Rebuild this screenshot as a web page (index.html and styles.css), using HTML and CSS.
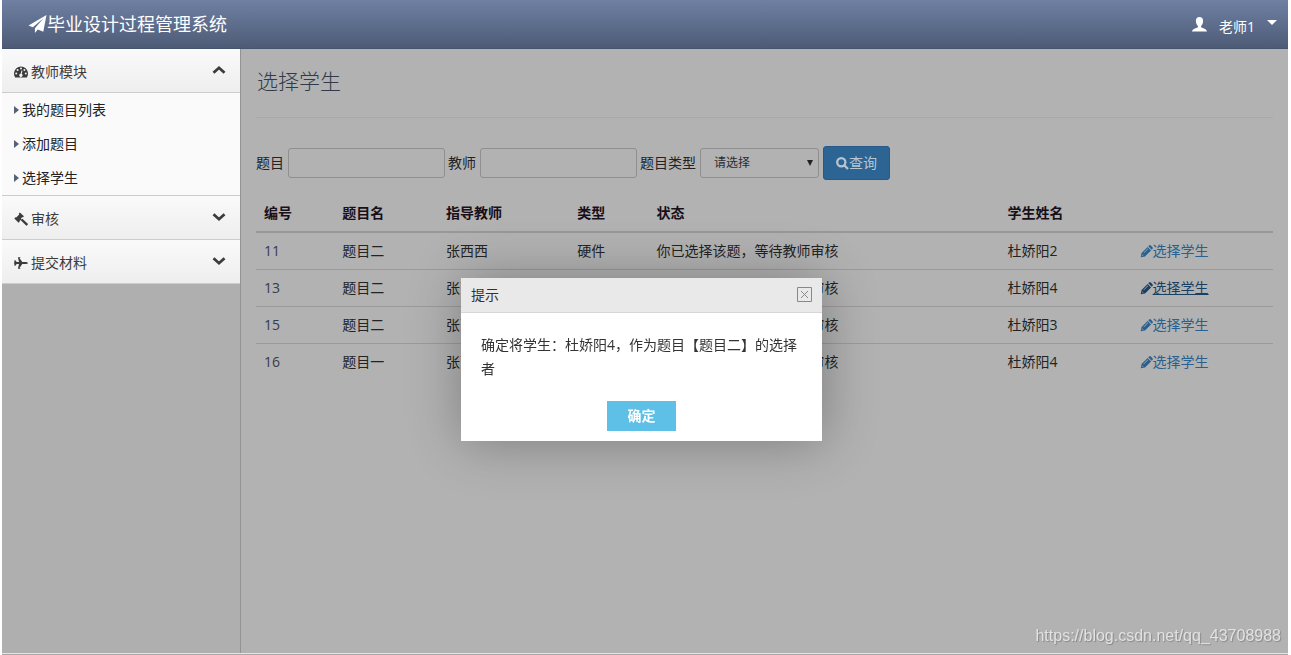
FILE: index.html
```html
<!DOCTYPE html>
<html lang="zh-CN">
<head>
<meta charset="utf-8">
<title>毕业设计过程管理系统</title>
<link rel="stylesheet" href="styles.css">
</head>
<body>
<svg class="defs" width="0" height="0" aria-hidden="true">
  <symbol id="pencil" viewBox="0 0 14 14"><path fill-rule="evenodd" d="M.8 13.200l.9-4.600L8.200 2.100l3.700 3.700-6.500 6.500zM2.300 11.700l1.600-.3-1.200-1.300zM3.600 8.500l.5.5 4.600-4.600-.5-.5zM8.900 1.400l.8-.8c.6-.6 1.400-.6 2 0l1.700 1.700c.6.600.6 1.400 0 2l-.8.8z"/></symbol>
  <symbol id="chevron" viewBox="0 0 14 10"><path d="M1.500 2.200L7 7.200l5.500-5" fill="none" stroke="currentColor" stroke-width="2.800"/></symbol>
  <symbol id="caret" viewBox="0 0 5 8"><path d="M0 0l5 4-5 4z"/></symbol>
</svg>
<header class="topbar">
  <h1 class="brand">
    <svg class="plane" viewBox="0 0 18 18" aria-hidden="true"><path d="M18 0L0 10.500l4.300 1.800L15 3.300 6.400 13.200V18l2.900-3.500 5.500 2.300z"/></svg>
    <span>毕业设计过程管理系统</span>
  </h1>
  <button class="user" type="button">
    <svg class="person" viewBox="0 0 15 15" aria-hidden="true"><path d="M7.500 0C5.200 0 3.900 1.500 3.900 4c0 2.300.9 3.900 2 4.900v1.300C4.500 11.100 0 12 0 14.500h15c0-2.500-4.500-3.400-5.900-4.300V8.900c1.100-1 2-2.600 2-4.900 0-2.500-1.300-4-3.600-4z"/></svg>
    <span>老师1</span>
    <svg class="drop" viewBox="0 0 10 5" aria-hidden="true"><path d="M0 0h10L5 5z"/></svg>
  </button>
</header>
<div class="layout">
  <nav class="sidebar">
    <button class="group" type="button" aria-expanded="true">
      <svg class="gicon" viewBox="0 0 14 14" aria-hidden="true"><path fill-rule="evenodd" d="M1.200 12.500A7 7 0 1 1 12.800 12.500zM2.200 7.500a1 1 0 1 0 0 2 1 1 0 0 0 0-2zM3.600 4a1 1 0 1 0 0 2 1 1 0 0 0 0-2zM7 2.500a1 1 0 1 0 0 2 1 1 0 0 0 0-2zM10.400 4a1 1 0 1 0 0 2 1 1 0 0 0 0-2zM11.800 7.500a1 1 0 1 0 0 2 1 1 0 0 0 0-2zM7.500 5.500L6.600 8.800a1.600 1.600 0 1 0 1.100.2l.8-3.300z"/></svg>
      <span>教师模块</span><svg class="chev up" aria-hidden="true"><use href="#chevron"/></svg>
    </button>
    <ul class="items">
      <li><a href="#"><svg class="caret" aria-hidden="true"><use href="#caret"/></svg>我的题目列表</a></li>
      <li><a href="#"><svg class="caret" aria-hidden="true"><use href="#caret"/></svg>添加题目</a></li>
      <li><a href="#"><svg class="caret" aria-hidden="true"><use href="#caret"/></svg>选择学生</a></li>
    </ul>
    <button class="group" type="button" aria-expanded="false">
      <svg class="gicon" viewBox="0 0 14 14" aria-hidden="true"><path d="M5.900.5l4 3.700-1 1.200-.6-.3L6.800 6.700l.7.7.9-.7 5.400 5c.7.700-1 2.500-1.700 1.800L7 8.500l-.6-.5-.9.900.3.700-1.200 1.100L.3 6.500l1.200-1.300.7.300L5.200 2.400l-.4-.8z"/></svg>
      <span>审核</span><svg class="chev" aria-hidden="true"><use href="#chevron"/></svg>
    </button>
    <button class="group" type="button" aria-expanded="false">
      <svg class="gicon" viewBox="0 0 14 14" aria-hidden="true"><path d="M14 7c0 .7-1.500 1.100-3 1.100H8.300L5.500 12h.8v.8H3.900L5 8.100H2.700L1.400 9.800H.4V8.100L0 7l.4-1.100V4.200h1l1.300 1.700H5L3.900 1.200h2.400V2h-.8l2.800 3.900H11c1.500 0 3 .4 3 1.100z"/></svg>
      <span>提交材料</span><svg class="chev" aria-hidden="true"><use href="#chevron"/></svg>
    </button>
  </nav>
  <main class="content">
    <h2 class="title">选择学生</h2>
    <form class="search">
      <label for="topic">题目</label><input id="topic" class="field" type="text">
      <label for="teacher">教师</label><input id="teacher" class="field" type="text">
      <label for="kind">题目类型</label>
      <span class="pick"><select id="kind"><option>请选择</option></select><svg class="arrow" viewBox="0 0 6 6" aria-hidden="true"><path d="M0 0h6L3 6z"/></svg></span>
      <button class="query" type="button"><svg viewBox="0 0 13 13" aria-hidden="true"><circle cx="5.300" cy="5.300" r="4.100"/><path d="M8.300 8.300l3.700 3.700"/></svg>查询</button>
    </form>
    <table class="grid">
      <thead><tr><th class="c1">编号</th><th class="c2">题目名</th><th class="c3">指导教师</th><th class="c4">类型</th><th class="c5">状态</th><th class="c6">学生姓名</th><th class="c7"></th></tr></thead>
      <tbody>
        <tr><td class="num">11</td><td>题目二</td><td>张西西</td><td>硬件</td><td>你已选择该题，等待教师审核</td><td>杜娇阳2</td><td><a class="act" href="#"><svg aria-hidden="true"><use href="#pencil"/></svg>选择学生</a></td></tr>
        <tr><td class="num">13</td><td>题目二</td><td>张西西</td><td>硬件</td><td>你已选择该题，等待教师审核</td><td>杜娇阳4</td><td><a class="act active" href="#"><svg aria-hidden="true"><use href="#pencil"/></svg><span>选择学生</span></a></td></tr>
        <tr><td class="num">15</td><td>题目二</td><td>张西西</td><td>硬件</td><td>你已选择该题，等待教师审核</td><td>杜娇阳3</td><td><a class="act" href="#"><svg aria-hidden="true"><use href="#pencil"/></svg>选择学生</a></td></tr>
        <tr><td class="num">16</td><td>题目一</td><td>张西西</td><td>硬件</td><td>你已选择该题，等待教师审核</td><td>杜娇阳4</td><td><a class="act" href="#"><svg aria-hidden="true"><use href="#pencil"/></svg>选择学生</a></td></tr>
      </tbody>
    </table>
  </main>
</div>
<div class="overlay">
  <section class="dialog" role="dialog" aria-labelledby="dlg">
    <header class="dhead"><h3 id="dlg">提示</h3><button class="close" type="button" aria-label="关闭"><svg viewBox="0 0 15 15" aria-hidden="true"><path d="M.5.5h14v14H.5zM4 4l7 7M11 4l-7 7"/></svg></button></header>
    <p class="msg">确定将学生：杜娇阳4，作为题目【题目二】的选择者</p>
    <button class="ok" type="button">确定</button>
  </section>
</div>
<div class="mark">https://blog.csdn.net/qq_43708988</div>
</body>
</html>
```
FILE: styles.css
```css
* { box-sizing: border-box; }
body {
  margin: 0;
  padding: 0 3px 0 2px;
  height: 100vh;
  display: flex;
  flex-direction: column;
  background: #fff;
  color: #232323;
  font: 14px/20px "Open Sans", "Noto Sans CJK SC", sans-serif;
  overflow: hidden;
}
button, input, select { font: inherit; color: inherit; }
h1, h2, h3, p, ul { margin: 0; padding: 0; font-weight: 400; }
a { text-decoration: none; color: inherit; }
svg { fill: currentColor; flex: none; }
.defs { position: absolute; }

.topbar {
  flex: none;
  height: 49px;
  padding: 0 11px 0 26px;
  display: flex;
  align-items: center;
  justify-content: space-between;
  background: linear-gradient(#6f80a3, #4d5b76);
  border-bottom: 1px solid #46536d;
  color: #fff;
}
.brand { display: flex; align-items: center; font-size: 18px; line-height: 26px; }
.plane { width: 19px; height: 18px; }
.user {
  display: flex;
  align-items: center;
  gap: 12px;
  padding: 5px 0 0;
  border: 0;
  background: none;
}
.person { width: 15px; height: 15px; margin-bottom: 4px; }
.drop { width: 10px; height: 5px; margin-bottom: 8px; }

.layout {
  flex: 1;
  display: flex;
  background: #b2b2b2;
  border-bottom: 1px solid #a8a8a8;
  box-shadow: inset 0 -1px #e4e4e4;
}
.sidebar {
  flex: none;
  width: 239px;
  margin-bottom: 1px;
  background: #afafaf;
  border-right: 1px solid #939393;
}
.group {
  display: flex;
  align-items: center;
  gap: 3px;
  width: 100%;
  height: 44px;
  padding: 2px 14px 0 12px;
  border: 0;
  border-bottom: 1px solid #ccc;
  background: linear-gradient(#fafafa, #eee);
  color: #3c3c3c;
}
.gicon { width: 14px; height: 14px; }
.chev { width: 14px; height: 10px; margin: 0 0 4px auto; }
.up { transform: rotate(180deg); }
.items { list-style: none; background: #fafafa; border-bottom: 1px solid #ccc; }
.items a { display: flex; align-items: center; gap: 3px; height: 34px; padding-left: 12px; color: #222; }
.caret { width: 5px; height: 8px; color: #566274; }

.content { flex: 1; padding: 0 15px; }
.title {
  height: 69px;
  padding: 19px 1px;
  border-bottom: 1px solid #a8a8a8;
  color: #303a49;
  font-size: 21px;
  font-weight: 300;
  line-height: 26px;
}
.search { display: flex; align-items: center; gap: 4px; margin-top: 28px; }
.field, .pick select {
  height: 30px;
  border: 1px solid #8f8f8f;
  border-radius: 3px;
  background: #b2b2b2;
}
.field { width: 157px; margin-right: -1px; }
.pick { display: flex; align-items: center; }
.pick select { appearance: none; width: 119px; padding: 0 12px 0 13px; font-size: 12px; color: #2d2d2d; }
.arrow { width: 6px; height: 6px; margin: 0 6px 0 -12px; pointer-events: none; color: #222; }
.query {
  display: flex;
  align-items: center;
  justify-content: center;
  width: 67px;
  height: 34px;
  padding: 0;
  border: 1px solid #28598a;
  border-radius: 3px;
  background: #2c6493;
  color: #b9c6d2;
}
.query svg { width: 13px; height: 13px; fill: none; stroke: currentColor; stroke-width: 2.300; }

.grid { width: 100%; margin-top: 14px; border-collapse: separate; border-spacing: 0; table-layout: fixed; }
.grid th, .grid td { padding: 8px; text-align: left; white-space: nowrap; }
.grid th { height: 39px; padding: 9px 8px 8px; border-bottom: 2px solid #989898; color: #180f18; font-weight: 700; }
.grid td { border-bottom: 1px solid #9b9b9b; }
.grid tr:last-child td { border-bottom: 0; }
.c1 { width: 7.7%; }
.c2 { width: 10.2%; }
.c3 { width: 12.9%; }
.c4 { width: 7.8%; }
.c5 { width: 34.5%; }
.c6 { width: 13%; }
.c7 { width: 13.9%; }
.grid .num { color: #353c4e; }
.act { display: flex; align-items: center; color: #29608f; }
.act svg { width: 13px; height: 13px; }
.active { color: #193f63; }
.active span { text-decoration: underline; }

.overlay {
  position: fixed;
  inset: 0;
  display: grid;
  place-items: center;
  padding: 63px 8px 0 0;
}
.dialog {
  width: 361px;
  padding-bottom: 10px;
  background: #fff;
  box-shadow: 1px 1px 50px rgba(0, 0, 0, .3);
  color: #333;
}
.dhead {
  display: flex;
  align-items: center;
  justify-content: space-between;
  height: 35px;
  padding: 0 10px;
  background: #e9e9e9;
  border-bottom: 1px solid #d6d6d6;
}
.dhead h3 { font-size: 14px; }
.close { display: flex; padding: 0; border: 0; background: none; color: #888; }
.close svg { width: 15px; height: 15px; fill: none; stroke: currentColor; }
.msg { padding: 20px; line-height: 24px; }
.ok {
  display: block;
  width: 69px;
  height: 30px;
  margin: 0 auto;
  padding: 0;
  border: 0;
  background: #5ebfe7;
  color: #fff;
  font-weight: 700;
}
.mark {
  position: fixed;
  right: 10px;
  bottom: 9px;
  color: #e2e2e2;
  font: 16px/20px "Liberation Sans", sans-serif;
  text-shadow: 1px 1px 1px #888;
}
```
